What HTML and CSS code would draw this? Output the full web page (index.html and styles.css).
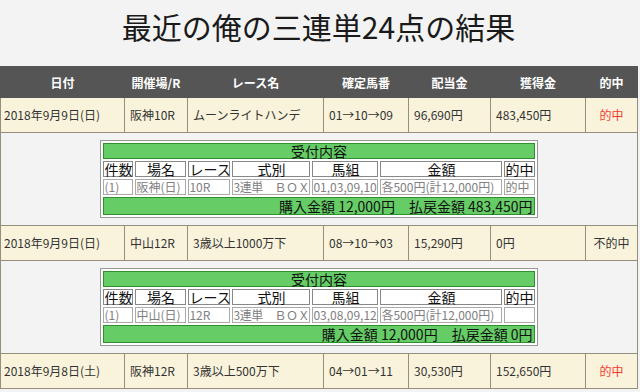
FILE: index.html
```html
<!DOCTYPE html>
<html lang="ja">
<head>
<meta charset="utf-8">
<title>最近の俺の三連単24点の結果</title>
<link rel="stylesheet" href="styles.css">
</head>
<body>
<div class="page">
  <h1 class="title">最近の俺の三連単24点の結果</h1>
  <table class="results">
    <colgroup>
      <col class="c-date"><col class="c-place"><col class="c-race"><col class="c-num"><col class="c-pay"><col class="c-win"><col class="c-hit">
    </colgroup>
    <thead>
      <tr><th>日付</th><th>開催場/R</th><th>レース名</th><th>確定馬番</th><th>配当金</th><th>獲得金</th><th>的中</th></tr>
    </thead>
    <tbody>
      <tr class="race">
        <td class="date">2018年9月9日(日)</td><td>阪神10R</td><td>ムーンライトハンデ</td><td>01→10→09</td><td>96,690円</td><td>483,450円</td><td class="hit win">的中</td>
      </tr>
      <tr class="detail">
        <td colspan="7">
          <table class="ticket">
            <colgroup><col class="t1"><col class="t2"><col class="t3"><col class="t4"><col class="t5"><col class="t6"><col class="t7"></colgroup>
            <tr><td colspan="7" class="bar center">受付内容</td></tr>
            <tr class="head"><td>件数</td><td>場名</td><td>レース</td><td>式別</td><td>馬組</td><td>金額</td><td>的中</td></tr>
            <tr class="vals"><td>(1)</td><td>阪神(日)</td><td>10R</td><td class="kind">3連単　ＢＯＸ</td><td>01,03,09,10</td><td>各500円(計12,000円)</td><td>的中</td></tr>
            <tr><td colspan="7" class="bar total">購入金額 12,000円　払戻金額 483,450円</td></tr>
          </table>
        </td>
      </tr>
      <tr class="race">
        <td class="date">2018年9月9日(日)</td><td>中山12R</td><td>3歳以上1000万下</td><td>08→10→03</td><td>15,290円</td><td>0円</td><td class="hit">不的中</td>
      </tr>
      <tr class="detail">
        <td colspan="7">
          <table class="ticket">
            <colgroup><col class="t1"><col class="t2"><col class="t3"><col class="t4"><col class="t5"><col class="t6"><col class="t7"></colgroup>
            <tr><td colspan="7" class="bar center">受付内容</td></tr>
            <tr class="head"><td>件数</td><td>場名</td><td>レース</td><td>式別</td><td>馬組</td><td>金額</td><td>的中</td></tr>
            <tr class="vals"><td>(1)</td><td>中山(日)</td><td>12R</td><td class="kind">3連単　ＢＯＸ</td><td>03,08,09,12</td><td>各500円(計12,000円)</td><td></td></tr>
            <tr><td colspan="7" class="bar total">購入金額 12,000円　払戻金額 0円</td></tr>
          </table>
        </td>
      </tr>
      <tr class="race">
        <td class="date">2018年9月8日(土)</td><td>阪神12R</td><td>3歳以上500万下</td><td>04→01→11</td><td>30,530円</td><td>152,650円</td><td class="hit win">的中</td>
      </tr>
    </tbody>
  </table>
</div>
</body>
</html>
```

FILE: styles.css
```css
html, body {
  margin: 0;
  padding: 0;
  background: #f3f3f3;
}
body {
  font-family: "Noto Sans CJK JP", "Noto Sans", sans-serif;
  color: #333;
}
.page {
  width: 637px;
}
.title {
  margin: 0 0 17px;
  padding-top: 3px;
  height: 46px;
  line-height: 46px;
  font-size: 30px;
  font-weight: normal;
  color: #1a1a1a;
  text-align: center;
}
.results {
  width: 637px;
  table-layout: fixed;
  border-collapse: collapse;
  font-size: 12px;
}
.c-date { width: 124px; }
.c-place { width: 63px; }
.c-race { width: 136px; }
.c-num { width: 85px; }
.c-pay { width: 82px; }
.c-win { width: 95px; }
.c-hit { width: 52px; }

.results th {
  background: #555;
  color: #fff;
  font-weight: bold;
  border: 1px solid #555;
  padding: 2px 0 0;
  line-height: 28px;
  text-align: center;
  white-space: nowrap;
}
.race td {
  background: #faf3dc;
  border: 1px solid #958d7d;
  padding: 0 0 0 5px;
  line-height: 34px;
  white-space: nowrap;
}
.race td.date { padding-left: 3px; }
.race td.hit {
  padding: 0;
  text-align: center;
}
.race td.win { color: #f23b2f; }

.detail > td {
  border: 1px solid #958d7d;
  padding: 7px 0;
}

.ticket {
  margin: 0 auto;
  width: 437px;
  table-layout: fixed;
  border-collapse: separate;
  border-spacing: 2px;
  border: 1px solid #999;
  background: #fff;
  font-size: 14px;
  color: #111;
}
.t1 { width: 30px; }
.t2 { width: 51px; }
.t3 { width: 42px; }
.t4 { width: 78px; }
.t5 { width: 66px; }
.t6 { width: 122px; }
.t7 { width: 30px; }

.ticket td {
  padding: 0;
  white-space: nowrap;
}
.ticket .bar {
  background: #66cc66;
  border: 1px solid #2f8f2f;
  height: 14px;
  line-height: 14px;
  padding: 0 1px;
}
.ticket .bar.center { text-align: center; }
.ticket .bar.total {
  text-align: right;
  height: 16px;
  line-height: 16px;
}
.ticket .head td {
  border: 1px solid #888;
  height: 14px;
  line-height: 14px;
  text-align: center;
}
.ticket .vals td {
  border: 1px solid #aaa;
  height: 14px;
  line-height: 14px;
  font-size: 12px;
  color: #808080;
  text-align: left;
}
.ticket .vals td.kind { letter-spacing: -0.4px; }
```
